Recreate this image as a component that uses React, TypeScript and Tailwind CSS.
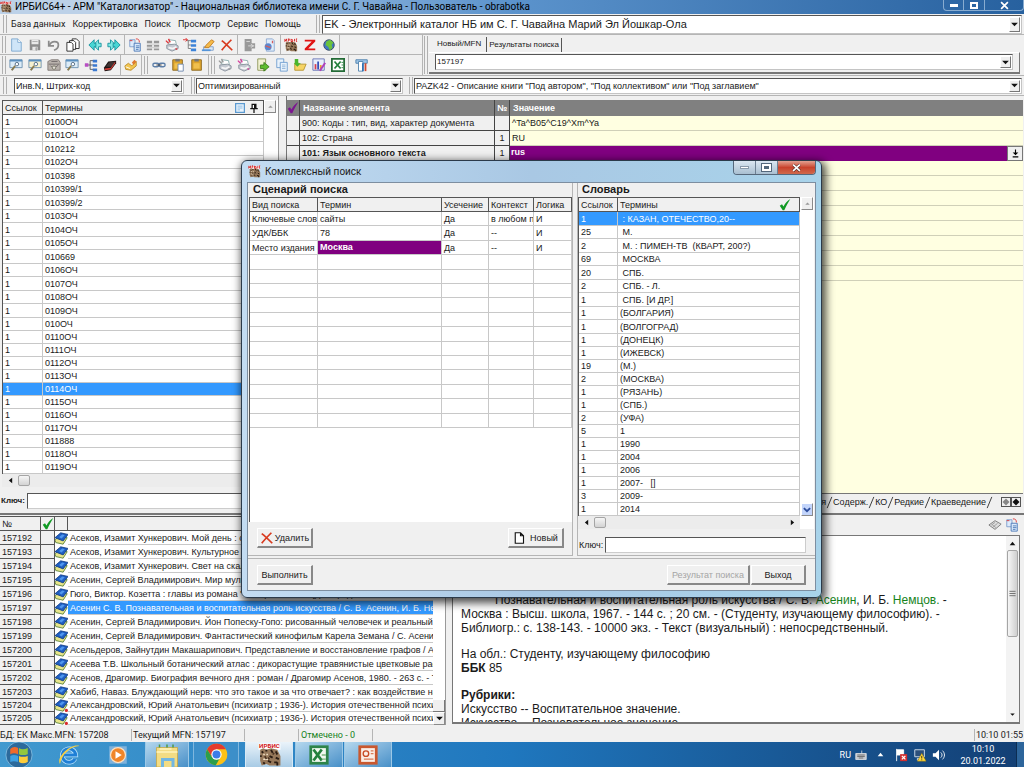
import type { ReactNode } from "react";

const terms = [
  "0100ОЧ", "0101ОЧ", "010212", "0102ОЧ", "010398", "010399/1", "010399/2", "0103ОЧ", "0104ОЧ",
  "0105ОЧ", "010669", "0106ОЧ", "0107ОЧ", "0108ОЧ", "0109ОЧ", "010ОЧ", "0110ОЧ", "0111ОЧ",
  "0112ОЧ", "0113ОЧ", "0114ОЧ", "0115ОЧ", "0116ОЧ", "0117ОЧ", "011888", "0118ОЧ", "0119ОЧ",
];

const dictionary = [
  ["1", " : КАЗАН, ОТЕЧЕСТВО,20--"],
  ["25", " М."],
  ["2", " М. : ПИМЕН-ТВ  (КВАРТ, 200?)"],
  ["69", " МОСКВА"],
  ["20", " СПБ."],
  ["2", " СПБ. - Л."],
  ["1", " СПБ. [И ДР.]"],
  ["1", "(БОЛГАРИЯ)"],
  ["1", "(ВОЛГОГРАД)"],
  ["1", "(ДОНЕЦК)"],
  ["1", "(ИЖЕВСК)"],
  ["19", "(М.)"],
  ["2", "(МОСКВА)"],
  ["1", "(РЯЗАНЬ)"],
  ["1", "(СПБ.)"],
  ["2", "(УФА)"],
  ["5", "1"],
  ["1", "1990"],
  ["1", "2004"],
  ["1", "2006"],
  ["1", "2007-   []"],
  ["3", "2009-"],
  ["1", "2014"],
];

const records = [
  ["157192", "Асеков, Изамит Хункерович. Мой день : стихи"],
  ["157193", "Асеков, Изамит Хункерович. Культурное строительство"],
  ["157194", "Асеков, Изамит Хункерович. Свет на скалах : стихи"],
  ["157195", "Асенин, Сергей Владимирович. Мир мультфильма"],
  ["157196", "Гюго, Виктор. Козетта : главы из романа \"Отверженные\" : [для среднего школьного возраста]"],
  ["157197", "Асенин С. В. Познавательная и воспитательная роль искусства / С. В. Асенин, И. Б. Немцов"],
  ["157198", "Асенин, Сергей Владимирович. Йон Попеску-Гопо: рисованный человечек и реальный мир"],
  ["157199", "Асенин, Сергей Владимирович. Фантастический кинофильм Карела Земана / С. Асенин"],
  ["157200", "Асельдеров, Зайнутдин Макашарипович. Представление и восстановление графов / А."],
  ["157201", "Асеева Т.В. Школьный ботанический атлас : дикорастущие травянистые цветковые растения"],
  ["157202", "Асенов, Драгомир. Биография вечного дня : роман / Драгомир Асенов, 1980. - 263 с. - Т"],
  ["157203", "Хабиб, Наваз. Блуждающий нерв: что это такое и за что отвечает? : как воздействие на"],
  ["157204", "Александровский, Юрий Анатольевич (психиатр ; 1936-). История отечественной психиатрии"],
  ["157205", "Александровский, Юрий Анатольевич (психиатр ; 1936-). История отечественной психиатрии"],
];

const scenario = [
  ["Ключевые слов", "сайты", "Да", "в любом п", "И"],
  ["УДК/ББК", "78", "Да", "--", "И"],
  ["Место издания", "Москва", "Да", "--", "И"],
  ...Array.from({ length: 12 }, () => ["", "", "", "", ""]),
];

const fields = [
  ["900: Коды : тип, вид, характер документа", "", "^Ta^B05^C19^Xm^Ya"],
  ["102: Страна", "1", "RU"],
  ["101: Язык основного текста", "1", "rus"],
  ...Array.from({ length: 8 }, () => ["", "", ""]),
];

const rowHeight = (i: number, tall: number) => (i < tall && i % 2 === 0 ? "h-[14px]" : "h-[13px]");

const Svg = ({ children, size = "size-[14px]" }: { children: ReactNode; size?: string }) => (
  <svg viewBox="0 0 16 16" className={`${size} shrink-0`} fill="none" aria-hidden="true">
    {children}
  </svg>
);

const Page = () => (
  <Svg>
    <path d="M3 1h7l4 4v10H3z" fill="#cfe5f8" stroke="#7aa7cf" />
    <path d="M10 1v4h4" fill="#fff" stroke="#7aa7cf" />
  </Svg>
);
const Save = () => (
  <Svg>
    <path d="M2 2h11l1 1v11H2z" fill="#8d8d8d" />
    <path d="M4 2h8v5H4zM5 10h6v4H5z" fill="#e9e9e9" />
    <path d="M9 11h1v3H9zM5 4h6" fill="#8d8d8d" stroke="#aaa" />
  </Svg>
);
const Undo = () => (
  <Svg>
    <path d="M2 3v6h6" stroke="#8a8a8a" strokeWidth="2" />
    <path d="M3 8c2-5 10-5 10 0 0 3-2 5-5 6" stroke="#8a8a8a" strokeWidth="2" />
  </Svg>
);
const Copies = () => (
  <Svg>
    <path d="M7 1h5l3 3v8H7z" fill="#fff" stroke="#222" />
    <path d="M4 3h5l2 2v8H4z" fill="#fff" stroke="#222" />
    <path d="M1 5h5l2 2v8H1z" fill="#fff" stroke="#222" />
  </Svg>
);
const Arrow = ({ flip = false }: { flip?: boolean }) => (
  <Svg>
    <g transform={flip ? "matrix(-1 0 0 1 16 0)" : undefined}>
      <path d="M6 8l6-6v4h3v4h-3v4z" fill="#7fe9e4" stroke="#168f9c" />
      <path d="M1 8l6-6v4h2v4H7v4z" fill="#48d5d3" stroke="#168f9c" />
    </g>
  </Svg>
);
const PageRed = () => (
  <Svg>
    <path d="M2 2h6v8H2z" fill="#dceafb" stroke="#7b9cc9" />
    <path d="M7 6h7v9H7z" fill="#dceafb" stroke="#4776b5" />
    <path d="M9 9h4M9 11h4M9 13h3" stroke="#4776b5" />
    <path d="M2 3h3M9 1c3 0 4 1 4 4" stroke="#d33" />
  </Svg>
);
const Rows = () => (
  <Svg>
    <path d="M1 3h6v3H1zM9 3h6v3H9zM1 8h6v2H1zM9 8h6v2H9zM1 12h6v2H1zM9 12h6v2H9z" fill="#989898" />
    <path d="M1 7h14M1 11h14" stroke="#c9c9c9" />
  </Svg>
);
const Printer = ({ mark = "#999" }: { mark?: string }) => (
  <Svg>
    <path d="M5 2l7 1 1 5-9-1z" fill="#fff" stroke="#8aa" />
    <path d="M2 8l9-1 4 2v3l-7 3-6-3z" fill="#c5cad2" stroke="#8b939e" />
    <path d="M4 11l5 1 4-2" stroke="#f6f6f6" strokeWidth="2" />
    <path d="M1 3l3 3M4 1l2 4M12 12l2 1" stroke={mark} strokeWidth="1.5" />
  </Svg>
);
const Tree = () => (
  <Svg>
    <path d="M4 3h5M6 3v9h3M6 8h3" stroke="#777" />
    <path d="M0 2h5M3 0l2 2-2 2" stroke="#d22" />
    <path d="M9 2h6v3H9zM9 7h6v3H9zM9 12h6v3H9z" fill="#3c83d8" />
  </Svg>
);
const Pencil = () => (
  <Svg>
    <path d="M3 10h11v4H3z" fill="#dce9f5" stroke="#7b9cc9" />
    <path d="M4 11l2-3 6-6 3 2-6 7z" fill="#f5bb4a" stroke="#c07a20" />
    <path d="M1 14h10" stroke="#5595d8" strokeWidth="2" />
  </Svg>
);
const Cross = () => (
  <Svg>
    <path d="M2 3c4 3 8 7 12 11M13 2C9 6 5 10 2 14" stroke="#d83a1f" strokeWidth="2" />
  </Svg>
);
const GrayDoc = () => (
  <Svg>
    <path d="M3 1h8v14H3zM6 6h9v6H6z" fill="#999" />
    <path d="M5 4h4M7 9h7M10 7l3 2-3 2" stroke="#ddd" />
  </Svg>
);
const PageGlobe = () => (
  <Svg>
    <path d="M5 1h7l2 2v12H5z" fill="#e0ecfa" stroke="#88a6cf" />
    <circle cx="7" cy="10" r="4" fill="#5b88cf" />
    <path d="M4 9l6 2M12 3v3" stroke="#d65d5d" strokeWidth="1.5" />
  </Svg>
);
const Leopard = ({ size, label = false }: { size?: string; label?: boolean }) => (
  <Svg size={size}>
    <path d="M1 1h14v4H1z" fill="#fff" />
    <path d="M2 5l2-1 2 1 3-1 4 1 2 4v6H8l-2-1-3 1-1-3z" fill="#96785a" />
    <path d="M3 6l1 1M6 5v1M9 5l1 2M12 6l1 2M2 9h1M8 9l2 1M12 10l2 1M7 12l2 1M11 13h2M4 13l1 1M13 13v2" stroke="#2a1c12" strokeWidth="1.200" />
    <path d="M4 8h1M7 8H6M4 11h3" stroke="#f3e2c6" />
    <path d="M5 9l1 2M7 10l1 1M10 8l1-1" stroke="#4a3322" />
    {label ? (
      <text x="8" y="4" textAnchor="middle" fontSize="4" fontWeight="bold" fill="#d21818">ИРБИС</text>
    ) : (
      <path d="M1 1v3l2-3v3M5 4V1h1v2M8 1v3h2V2H8M12 4V1M15 1h-1v3h1" stroke="#d21818" />
    )}
  </Svg>
);
const Zed = () => (
  <Svg>
    <path d="M2 2h12v2l-8 8h8v2H2v-2l8-8H2z" fill="#e01515" />
  </Svg>
);
const Globe = () => (
  <Svg>
    <circle cx="8" cy="8" r="6" fill="#3f78c4" stroke="#39495f" />
    <path d="M5 4l4-2 4 3-2 3 1 3-3 3-2-4-3-2z" fill="#6bc33b" />
  </Svg>
);
const Search = ({ tint = "#dcecf8" }: { tint?: string }) => (
  <Svg>
    <path d="M1 2h14v9H6l-2 3v-3H1z" fill={tint} stroke="#6a8fae" />
    <path d="M1 2h14v2H1z" fill="#5b90c0" />
    <circle cx="9" cy="7" r="2" fill="#fff" stroke="#47627b" />
    <path d="M7 9l-4 5" stroke="#8a7a4a" strokeWidth="2" />
  </Svg>
);
const Cabinet = () => (
  <Svg>
    <path d="M1 4l4-2h8l2 3v9H1z" fill="#b9b2ac" stroke="#7f7775" />
    <path d="M2 7h12M4 9l4 3 5-4M5 4h7" stroke="#6f6868" />
    <circle cx="8" cy="11" r="2" fill="#e5e0da" stroke="#776" />
  </Svg>
);
const Nodes = () => (
  <Svg>
    <path d="M1 8h6M7 3v10M7 3h4M7 8h4M7 13h4" stroke="#555" />
    <path d="M10 2h5v3h-5zM10 7h5v3h-5zM10 12h5v3h-5z" fill="#3b78cf" />
    <path d="M1 6h4v4H1z" fill="#b84ec4" />
  </Svg>
);
const RedBook = () => (
  <Svg>
    <path d="M1 11l5-7 9-1 0 3-6 8-7 1z" fill="#1c1414" />
    <path d="M3 10l4-5 7-1-4 6z" fill="#403433" />
    <path d="M2 12l7-1 5-7v2l-5 7-7 1z" fill="#d23c35" />
  </Svg>
);
const Eraser = () => (
  <Svg>
    <path d="M1 9l4-3 4 3 5-5v5l-6 5-6-1z" fill="#f2c650" stroke="#b98a2a" />
    <path d="M9 5l3-3 2 2-3 4z" fill="#e07a30" />
    <path d="M2 10l5 2" stroke="#fff" />
  </Svg>
);
const Link = () => (
  <Svg>
    <rect x="1" y="6" width="7" height="4" rx="2" stroke="#5d7fa8" strokeWidth="1.600" />
    <rect x="8" y="6" width="7" height="4" rx="2" stroke="#5d7fa8" strokeWidth="1.600" />
    <path d="M5 8h6" stroke="#333" />
  </Svg>
);
const Clipboard = ({ page = false }: { page?: boolean }) => (
  <Svg>
    <path d="M2 2h11v12H2z" fill="#dda52d" stroke="#8c661c" />
    <path d="M5 1h5v3H5z" fill="#777" />
    <path d="M4 6h7v6H4z" fill="#f0c04e" />
    {page && <path d="M8 7h6v8H8z" fill="#fff" stroke="#6985ad" />}
  </Svg>
);
const GreenExport = () => (
  <Svg>
    <path d="M2 1h9v13H2z" fill="#f2f2d4" stroke="#8a9252" />
    <path d="M5 8h4V5l6 5-6 5v-3H5z" fill="#5ebd2f" stroke="#3c7d1e" />
  </Svg>
);
const BluePages = () => (
  <Svg>
    <path d="M2 1h8v10H2z" fill="#e9f2fb" stroke="#6d9bcf" />
    <path d="M6 5h8v10H6z" fill="#e9f2fb" stroke="#6d9bcf" />
    <path d="M8 8h4M8 10h4M8 12h4" stroke="#8fb2d8" />
  </Svg>
);
const GreenFolder = () => (
  <Svg>
    <path d="M2 6h5l1 1h7l-3 7H2z" fill="#f6d465" stroke="#b6922d" />
    <path d="M2 1h4v5h3L5 10 1 6h1z" fill="#49b52d" />
  </Svg>
);
const Chart = () => (
  <Svg>
    <path d="M1 1h13v13H1z" fill="#e8eefb" stroke="#6470b4" />
    <path d="M3 7h2v6H3z" fill="#d83e4e" />
    <path d="M6 4h2v9H6z" fill="#364fb8" />
    <path d="M9 8h2v5H9z" fill="#e5a22f" />
    <path d="M8 14l6-9 2 1-6 9z" fill="#b13fb9" />
  </Svg>
);
const Excel = () => (
  <Svg>
    <path d="M1 1h14v14H1z" fill="#fff" stroke="#236b36" strokeWidth="2" />
    <path d="M4 4l7 8M11 4l-7 8" stroke="#23803c" strokeWidth="2" />
    <path d="M12 5h2M12 8h2M12 11h2" stroke="#23803c" />
  </Svg>
);
const Tools = () => (
  <Svg>
    <path d="M1 2h13v4H1z" fill="#9fc6e8" stroke="#4c7fac" />
    <path d="M4 4h5v11H4z" fill="#fff" stroke="#4c7fac" />
    <path d="M9 6v9" stroke="#2f72b5" strokeWidth="2" />
    <path d="M12 6v9" stroke="#d04a30" strokeWidth="2" />
  </Svg>
);
const Check = ({ color }: { color: string }) => (
  <Svg size="size-[12px]">
    <path d="M1 9l3-2 2 3c2-4 5-8 9-10C12 5 10 9 7 15H5z" fill={color} />
  </Svg>
);
const Book = ({ red = false }: { red?: boolean }) => (
  <Svg size="size-[13px]">
    <path d="M0 10l5-5 10 2-5 8-9-2z" fill="#e8e58a" stroke="#4e7a2f" />
    <path d="M0 7l7-6 9 2-6 8z" fill="#1f5fc4" stroke="#123c83" />
    <path d="M5 6l4-3 3 1-4 4z" fill="#4f97ee" />
    {red && <circle cx="14" cy="14" r="2" fill="#d92b2b" />}
  </Svg>
);
const Triangle = ({ d = "M4 6h8l-4 4z", color = "#111" }: { d?: string; color?: string }) => (
  <Svg size="size-[9px]">
    <path d={d} fill={color} />
  </Svg>
);

const Sep = () => <span className="mx-px w-px self-stretch bg-[#b5b5b5]" />;
const Grip = () => (
  <span className="flex shrink-0 gap-[2px] self-stretch px-px py-px">
    <i className="w-px bg-[#b0b0b0]" />
    <i className="w-px bg-[#b0b0b0]" />
  </span>
);

const ToolGroup = ({ width, items }: { width: string; items: [string, ReactNode][] }) => (
  <span className={`flex ${width}`}>
    {items.map(([label, icon]) => (
      <button key={label} type="button" aria-label={label} className="flex flex-1 items-center justify-center">
        {icon}
      </button>
    ))}
  </span>
);

const Combo = ({ label, value, className }: { label: string; value: string; className: string }) => (
  <span className={`relative flex min-w-0 border border-[#c4c4c4] border-t-[#555] border-l-[#555] bg-white ${className}`}>
    <select aria-label={label} className="w-full min-w-0 appearance-none bg-transparent pl-px outline-none">
      <option>{value}</option>
    </select>
    <span className="pointer-events-none absolute inset-y-px right-px flex w-[11px] items-center justify-center border border-[#777] border-t-white border-l-white bg-[#efefef]">
      <Triangle d="M2 5h12l-6 6z" />
    </span>
  </span>
);

const ScrollButton = ({ label, className = "bg-[#f0f0f0]", children }: { label: string; className?: string; children: ReactNode }) => (
  <button
    type="button"
    aria-label={label}
    className={`flex h-[13px] w-3 shrink-0 items-center justify-center border border-[#8a8a8a] border-t-white border-l-white ${className}`}
  >
    {children}
  </button>
);

const HScroll = () => (
  <div className="flex h-[13px] items-center bg-[#ececec]">
    <span className="flex w-4 justify-center">
      <Triangle d="M11 3v10L5 8z" />
    </span>
    <span className="h-[11px] w-3 rounded-[2px] border border-[#a5a5a5] bg-linear-to-b from-[#f6f6f6] to-[#d3d3d3]" />
    <span className="ml-auto flex w-4 justify-center">
      <Triangle d="M5 3v10l6-5z" />
    </span>
  </div>
);

const th = "h-[14px] border-r border-b border-[#555] p-0 pl-[2px] text-left font-normal leading-3";
const td = "overflow-hidden border-r border-b border-[#c8c8c8] p-0 pl-[2px] leading-3 whitespace-pre";

const Toolbars = () => (
  <div className="flex border-b border-[#b5b5b5]">
    <div className="flex w-[422px] shrink-0 flex-col">
      <div className="flex h-5 border-b border-[#b5b5b5] pl-px">
        <Grip />
        <ToolGroup width="w-[75px]" items={[["Новая", <Page />], ["Сохранить", <Save />], ["Отменить", <Undo />], ["Копия", <Copies />]]} />
        <Sep />
        <ToolGroup width="w-[38px]" items={[["Назад", <Arrow />], ["Вперед", <Arrow flip />]]} />
        <Sep />
        <ToolGroup
          width="w-[110px]"
          items={[["Вставить", <PageRed />], ["Строки", <Rows />], ["Печать", <Printer mark="#e0343a" />], ["Дерево", <Tree />], ["Правка", <Pencil />], ["Удалить запись", <Cross />]]}
        />
        <Sep />
        <ToolGroup width="w-[40px]" items={[["Документ", <GrayDoc />], ["Веб", <PageGlobe />]]} />
        <Sep />
        <ToolGroup width="w-[56px]" items={[["ИРБИС", <Leopard />], ["Z39.50", <Zed />], ["Интернет", <Globe />]]} />
        <Sep />
      </div>
      <div className="flex h-5 pl-px">
        <Grip />
        <ToolGroup
          width="w-[112px]"
          items={[["Поиск", <Search />], ["Поиск 2", <Search tint="#f5f0cf" />], ["Картотека", <Cabinet />], ["Поиск 3", <Search />], ["Узлы", <Nodes />], ["Книга", <RedBook />]]}
        />
        <Sep />
        <ToolGroup width="w-[18px]" items={[["Очистить", <Eraser />]]} />
        <Sep />
        <Grip />
        <ToolGroup width="w-[58px]" items={[["Ссылка", <Link />], ["Вставка", <Clipboard page />], ["Буфер", <Clipboard />]]} />
        <Sep />
        <Grip />
        <ToolGroup
          width="w-[131px]"
          items={[["Принтер", <Printer />], ["Принтер 2", <Printer mark="#d33e9a" />], ["Экспорт", <GreenExport />], ["Страницы", <BluePages />], ["Импорт", <GreenFolder />], ["Статистика", <Chart />], ["Excel", <Excel />]]}
        />
        <Sep />
        <ToolGroup width="w-[24px]" items={[["Настройки", <Tools />]]} />
      </div>
    </div>
    <div className="flex min-w-0 flex-1 border-l border-[#b5b5b5]">
      <Grip />
      <div className="flex min-w-0 flex-1 flex-col pt-[2px] pr-1 text-[8px]">
        <div role="tablist" className="flex h-[15px] pl-[3px]">
          <button type="button" role="tab" aria-selected="true" className="border-r border-[#555] px-[5px] pb-px">
            Новый/MFN
          </button>
          <button type="button" role="tab" aria-selected="false" className="mt-px border-r border-[#555] px-[2px]">
            Результаты поиска
          </button>
        </div>
        <div className="border-t border-r border-b-2 border-t-white border-r-[#777] border-b-[#777] px-[6px] pt-px pb-[2px]">
          <Combo label="MFN" value="157197" className="h-4" />
        </div>
      </div>
    </div>
  </div>
);

const TermsPanel = () => (
  <div className="w-[279px] shrink-0 border-r border-[#999] pt-1">
    <div className="flex pl-[2px]">
      <table className="w-[262px] table-fixed border-separate border-spacing-0 border-t border-l border-[#555] bg-white">
        <thead>
          <tr className="bg-[#f0f0f0]">
            <th className={`${th} w-10`}>Ссылок</th>
            <th className={th}>
              <span className="flex items-center justify-between pr-1">
                Термины
                <span className="flex items-center gap-1">
                  <Svg size="size-[10px]">
                    <path d="M1 1h14v14H1z" fill="#e9f3fc" stroke="#5c9ad0" strokeWidth="2" />
                    <path d="M4 5h8M4 8h8M4 11h4" stroke="#8dbbe2" strokeWidth="1.500" />
                  </Svg>
                  <Svg size="size-[10px]">
                    <path d="M4 1h8v7h2v2H2V8h2zM7 10h2v6H7z" fill="#111" />
                    <path d="M6 3h2v5H6z" fill="#fff" />
                  </Svg>
                </span>
              </span>
            </th>
          </tr>
        </thead>
        <tbody>
          {terms.map((term, i) => (
            <tr key={term} className={`${rowHeight(i, 15)} ${term === "0114ОЧ" ? "bg-[#3399ff] text-white" : ""}`}>
              <td className={td}>1</td>
              <td className={td}>{term}</td>
            </tr>
          ))}
        </tbody>
      </table>
      <div className="flex flex-1 flex-col justify-between bg-white">
        <ScrollButton label="Вверх">
          <Triangle d="M4 10h8L8 6z" color="#999" />
        </ScrollButton>
        <ScrollButton label="Вниз">
          <Triangle />
        </ScrollButton>
      </div>
    </div>
    <div className="pl-[2px]">
      <HScroll />
    </div>
    <div className="flex items-center pt-[6px] pb-[3px] pl-px text-[8px] font-bold">
      <label htmlFor="key-main" className="w-[26px]">Ключ:</label>
      <input id="key-main" className="h-4 min-w-0 flex-1 border border-[#ccc] border-t-[#555] border-l-[#555] bg-white" />
    </div>
  </div>
);

const FieldsPanel = () => (
  <div className="ml-[7px] flex min-w-0 flex-1 flex-col border-l border-[#777] pt-1 pr-px pb-[2px]">
    <div className="flex-1 border-b border-[#777] bg-[#ffffe1]">
      <table className="w-full table-fixed border-separate border-spacing-0">
        <thead>
          <tr className="bg-[#808080] text-white">
            <th className="h-4 w-[13px] border-r border-[#444] p-0"><Check color="#7b1590" /></th>
            <th className="w-[195px] border-r border-[#444] p-0 pl-[3px] text-left">Название элемента</th>
            <th className="w-[15px] border-r border-[#444] p-0">№</th>
            <th className="p-0 pl-[3px] text-left">Значение</th>
          </tr>
        </thead>
        <tbody>
          {fields.map(([name, no, value], i) => (
            <tr key={i} className="h-[15px]">
              <td className="border-r border-b border-[#444] bg-[#f0f0f0] p-0" />
              <td className={`overflow-hidden border-r border-b border-[#444] bg-[#f0f0f0] p-0 pl-[2px] leading-3 whitespace-nowrap ${i === 2 ? "font-bold" : ""}`}>{name}</td>
              <td className="border-r border-b border-[#444] bg-[#f0f0f0] p-0 text-center leading-3">{no}</td>
              <td className={i === 2 ? "bg-[#800080] p-0 leading-3 font-bold text-white" : "border-b border-[#d0d0b8] p-0 pl-[2px] leading-3"}>
                {i === 2 ? (
                  <span className="flex h-[15px] justify-between pl-px">
                    {value}
                    <button type="button" aria-label="Развернуть" className="flex w-4 items-center justify-center border border-[#777] bg-[#f0f0f0]">
                      <Svg size="size-[9px]">
                        <path d="M7 1h2v5h4l-5 5-5-5h4zM3 13h10v2H3z" fill="#000" />
                      </Svg>
                    </button>
                  </span>
                ) : value}
              </td>
            </tr>
          ))}
        </tbody>
      </table>
    </div>
    <div className="flex h-4 items-center justify-end bg-[#f0f0f0] pr-[2px]">
      {["Технология", "Содерж.", "КО", "Редкие", "Краеведение"].map((tab) => (
        <button key={tab} type="button" className="flex items-center">
          {tab}
          <svg viewBox="0 0 7 14" className="h-[13px] w-[7px]" aria-hidden="true">
            <path d="M1 13L6 1" stroke="#333" />
          </svg>
        </button>
      ))}
      <span className="ml-2 flex">
        {["#888", "#111"].map((color) => (
          <button key={color} type="button" aria-label="Прокрутить вкладки" className="border border-[#555]">
            <Svg size="size-[8px]">
              <path d="M8 1l7 7-7 7-7-7z" fill={color} />
            </Svg>
          </button>
        ))}
      </span>
    </div>
  </div>
);

const RecordsPanel = () => (
  <div className="flex w-[446px] shrink-0 self-start border-r border-[#999] pt-px">
    <table className="w-[433px] table-fixed border-separate border-spacing-0 border-t border-[#555] bg-white">
      <thead>
        <tr className="bg-[#f0f0f0]">
          <th className={`${th} w-[41px]`}>№</th>
          <th className={`${th} w-[14px] pl-px`}><Check color="#119a24" /></th>
          <th className={`${th} w-[13px]`} />
          <th className={th} />
        </tr>
      </thead>
      <tbody>
        {records.map(([mfn, text], i) => (
          <tr key={mfn} className={i < 12 ? "h-[14px]" : "h-[13px]"}>
            <td className="border-r border-b border-[#555] bg-[#f0f0f0] p-0 pl-[2px] leading-3">{mfn}</td>
            <td className="border-r border-b border-[#555] bg-[#f0f0f0] p-0" />
            <td className="p-0">
              <span className="flex h-3 items-center"><Book red={i > 11} /></span>
            </td>
            <td className={`overflow-hidden border-b border-[#c8c8c8] p-0 pl-[2px] leading-3 whitespace-nowrap ${mfn === "157197" ? "bg-[#3399ff] text-white" : ""}`}>{text}</td>
          </tr>
        ))}
      </tbody>
    </table>
    <div className="flex flex-1 flex-col justify-between bg-white">
      <ScrollButton label="Вверх"><Triangle d="M4 10h8L8 6z" /></ScrollButton>
      <span className="flex flex-col">
        <i className="h-3 w-3 border-r border-b border-[#777] bg-[#f0f0f0]" />
        <ScrollButton label="Вниз"><Triangle d="M2 5h12l-6 6z" /></ScrollButton>
      </span>
    </div>
  </div>
);

const PreviewPanel = () => (
  <div className="ml-[6px] flex min-w-0 flex-1 flex-col pr-1 pb-1">
    <div className="flex h-5 items-center justify-end gap-[3px] pr-px">
      <Svg>
        <path d="M1 8l7-5 7 4-7 6z" fill="#ddd" stroke="#777" />
        <path d="M4 8l4-3M6 10l5-4M4 7l5 4" stroke="#999" />
      </Svg>
      <PageRed />
    </div>
    <div className="flex h-0 grow border border-b-2 border-[#777] bg-white">
      <article className="min-w-0 flex-1 overflow-hidden pt-[57px] pl-2 text-xs leading-[14px]">
        <p className="indent-[34px]">
          Познавательная и воспитательная роль искусства / С. В.{" "}
          <a href="#asenin" className="text-[#16831c]">Асенин</a>, И. Б.{" "}
          <a href="#nemtsov" className="text-[#16831c]">Немцов.</a> -
        </p>
        <p>Москва : Высш. школа, 1967. - 144 с. ; 20 см. - (Студенту, изучающему философию). -</p>
        <p>Библиогр.: с. 138-143. - 10000 экз. - Текст (визуальный) : непосредственный.</p>
        <p className="mt-[13px] leading-[13px]">На обл.: Студенту, изучающему философию</p>
        <p><b>ББК</b> 85</p>
        <h2 className="mt-[13px] font-bold">Рубрики:</h2>
        <p>Искусство -- Воспитательное значение.</p>
        <p>Искусство -- Познавательное значение.</p>
      </article>
      <div className="flex w-[13px] flex-col items-center bg-[#f3f3f3] py-[3px]">
        <Triangle d="M3 11h10L8 5z" />
        <span className="mt-[2px] flex h-[87px] w-[11px] items-center justify-center rounded-[2px] border border-[#a5a5a5] bg-linear-to-r from-[#f6f6f6] to-[#cfcfcf]">
          <Svg size="size-[7px]">
            <path d="M1 3h14M1 8h14M1 13h14" stroke="#666" strokeWidth="2" />
          </Svg>
        </span>
        <span className="mt-auto"><Triangle /></span>
      </div>
    </div>
  </div>
);

const dialogButton = "flex h-5 items-center justify-center gap-px border border-r-2 border-b-2 border-[#888] border-t-white border-l-white bg-[#f0f0f0] whitespace-nowrap";

const SearchDialog = () => (
  <section
    role="dialog"
    aria-labelledby="dialog-title"
    className="absolute top-[160px] left-[241px] flex w-[581px] flex-col rounded-md border border-[#2b3a4a] bg-linear-to-r from-[#c3dcf2] via-[#a9c8e4] to-[#a8d3ea] px-[5px] pb-[6px] shadow-[2px_3px_8px_2px_rgba(0,0,0,0.7)]"
  >
    <header className="flex h-[21px] items-start justify-between">
      <h1 id="dialog-title" className="flex h-full items-center gap-1 pl-px font-[Roboto] text-[10px] text-[#222]">
        <Leopard size="size-[13px]" />
        Комплексный поиск
      </h1>
      <div className="flex h-[14px] overflow-hidden rounded-b border border-t-0 border-[#56687b]">
        <button type="button" aria-label="Свернуть" className="flex w-[22px] items-center justify-center border-r border-[#6d8093] bg-linear-to-b from-[#dbe7f1] to-[#a9bfd1]">
          <i className="h-[3px] w-[9px] border border-[#8b9bab] bg-white" />
        </button>
        <button type="button" aria-label="Развернуть" className="flex w-[22px] items-center justify-center border-r border-[#6d8093] bg-linear-to-b from-[#dbe7f1] to-[#a9bfd1]">
          <i className="h-[7px] w-[9px] border-2 border-white bg-[#54687c] outline-1 outline-[#54687c]" />
        </button>
        <button type="button" aria-label="Закрыть" className="flex w-[37px] items-center justify-center bg-linear-to-b from-[#e2a091] via-[#c8422c] to-[#d0694c]">
          <Svg size="size-[9px]">
            <path d="M2 3l12 11M14 3L2 14" stroke="#52302b" strokeWidth="5" />
            <path d="M2 3l12 11M14 3L2 14" stroke="#fff" strokeWidth="3" />
          </Svg>
        </button>
      </div>
    </header>
    <div className="border border-[#7d8ea0] bg-[#f0f0f0]">
      <div className="flex gap-1">
        <div className="w-[325px] border-r border-b border-[#b5b5b5] pl-px">
          <h2 className="h-[14px] pl-1 text-[11px] leading-[13px] font-bold">Сценарий поиска</h2>
          <div className="h-[325px] border-l border-[#555] bg-white">
            <table className="w-full table-fixed border-separate border-spacing-0 border-t border-[#555]">
              <thead>
                <tr className="bg-[#f0f0f0]">
                  <th className={`${th} w-[68px]`}>Вид поиска</th>
                  <th className={`${th} w-[124px]`}>Термин</th>
                  <th className={`${th} w-[47px]`}>Усечение</th>
                  <th className={`${th} w-[45px]`}>Контекст</th>
                  <th className={th}>Логика</th>
                </tr>
              </thead>
              <tbody>
                {scenario.map((row, i) => (
                  <tr key={i} className={i % 5 === 1 || i % 5 === 3 ? "h-[15px]" : "h-[14px]"}>
                    {row.map((cell, j) => (
                      <td key={j} className={`${td} ${cell === "Москва" ? "bg-[#800080] align-top font-bold text-white" : ""}`}>{cell}</td>
                    ))}
                  </tr>
                ))}
              </tbody>
            </table>
          </div>
          <div className="flex justify-between pt-[6px] pr-2 pb-[7px] pl-2">
            <button type="button" className={`${dialogButton} w-14`}><Cross />Удалить</button>
            <button type="button" className={`${dialogButton} w-14`}>
              <Svg size="size-[12px]">
                <path d="M3 1h7l4 4v10H3zM10 1v4h4" fill="#fff" stroke="#111" strokeWidth="1.500" />
              </Svg>
              <span className="pl-1">Новый</span>
            </button>
          </div>
        </div>
        <div className="min-w-0 flex-1 border-b border-l border-[#b5b5b5] pr-px">
          <h2 className="h-[14px] pl-1 text-[11px] leading-[13px] font-bold">Словарь</h2>
          <div className="flex">
            <div className="min-w-0 flex-1">
              <table className="w-full table-fixed border-separate border-spacing-0 border-t border-l border-[#555] bg-white">
                <thead>
                  <tr className="bg-[#f0f0f0]">
                    <th className={`${th} w-[39px]`}>Ссылок</th>
                    <th className={th}>
                      <span className="flex items-center justify-between pr-2">Термины<Check color="#119a24" /></span>
                    </th>
                  </tr>
                </thead>
                <tbody>
                  {dictionary.map(([count, term], i) => (
                    <tr key={term} className={`${rowHeight(i, 9)} ${i === 0 ? "bg-[#3399ff] text-white" : ""}`}>
                      <td className={td}>{count}</td>
                      <td className={td}>{term}</td>
                    </tr>
                  ))}
                </tbody>
              </table>
              <HScroll />
            </div>
            <div className="flex w-[14px] flex-col justify-between bg-white pb-[13px] pl-px">
              <ScrollButton label="Вверх"><Triangle d="M4 10h8L8 6z" color="#999" /></ScrollButton>
              <ScrollButton label="Вниз" className="bg-[#c3d5fb]">
                <Svg size="size-[10px]">
                  <path d="M3 5l5 5 5-5" stroke="#2c4d9c" strokeWidth="3" />
                </Svg>
              </ScrollButton>
            </div>
          </div>
          <div className="flex items-center pt-2 pr-2">
            <label htmlFor="key-dialog" className="w-[27px] pl-px">Ключ:</label>
            <input id="key-dialog" className="h-4 min-w-0 flex-1 border border-[#ccc] border-t-[#555] border-l-[#555] bg-white" />
          </div>
        </div>
      </div>
      <footer className="mt-[2px] flex items-center border-t border-[#b5b5b5] px-[9px] pt-[6px] pb-[5px]">
        <button type="button" className={`${dialogButton} w-14`}>Выполнить</button>
        <button type="button" disabled className={`${dialogButton} ml-auto w-[83px] text-[#a5a5a5]`}>Результат поиска</button>
        <button type="button" className={`${dialogButton} ml-px w-[55px]`}>Выход</button>
      </footer>
    </div>
  </section>
);

const taskButton = "flex h-full items-center justify-center overflow-hidden";
const taskActive = "border-x border-[#9cc8e6] bg-linear-to-br from-[#b5d8ee] to-[#4790c8]";

const Taskbar = () => (
  <nav className="flex h-[25px] items-stretch overflow-hidden bg-linear-to-r from-[#4199cf] via-[#1f77be] to-[#133f74] font-[Roboto] text-white">
    <button type="button" aria-label="Пуск" className={`${taskButton} w-[38px]`}>
      <Svg size="size-[28px]">
        <circle cx="8" cy="8" r="7.500" fill="#2c6a9c" stroke="#82bde0" strokeWidth="0.500" />
        <path d="M3 4.500q2-2 4.500-.5v3.500q-2.500-1-4.500 0z" fill="#ef6a2c" />
        <path d="M8 4q2 1.500 5 0v3.500q-3 1-5 0z" fill="#92c83e" />
        <path d="M3 8.500q2-1 4.500 0V12Q5 11 3 12z" fill="#3da1e4" />
        <path d="M8 8.500q2 1 5 0V12q-3 1.500-5 0z" fill="#fdcd3a" />
      </Svg>
    </button>
    <button type="button" aria-label="Internet Explorer" className={`${taskButton} ml-2 w-[46px]`}>
      <Svg size="size-[24px]">
        <path d="M12 10.500a4.500 4.500 0 1 1 .5-2.500H4.500" stroke="#bfe6ff" strokeWidth="3" />
        <path d="M12 10.500a4.500 4.500 0 1 1 .5-2.500H4.500" stroke="#1f7fd6" strokeWidth="2" />
        <path d="M2 14C-1 10 9 0 15 2 9 2 3 8 2 14z" fill="#f4cf45" />
      </Svg>
    </button>
    <button type="button" aria-label="Проигрыватель" className={`${taskButton} w-[51px]`}>
      <Svg size="size-[20px]">
        <rect x="1" y="1" width="14" height="14" fill="#7fb2dc" />
        <circle cx="8" cy="8" r="6" fill="#f0862a" stroke="#fbe1c2" />
        <path d="M6 5v6l5-3z" fill="#fff" />
      </Svg>
    </button>
    <button type="button" aria-label="Проводник" className={`${taskButton} ${taskActive} ml-[2px] w-11`}>
      <Svg size="size-[24px]">
        <path d="M1 3h14v13H1z" fill="#f3dc83" stroke="#c9a53d" strokeWidth="0.500" />
        <path d="M3 1v2M8 1v2M12 1v2" stroke="#4c9b48" />
        <path d="M1 6h14M3 4h8" stroke="#fff3bd" />
        <path d="M4 10h9v6H4z" fill="#73b7e1" />
        <path d="M6 12h5v4H6z" fill="#f3dc83" />
      </Svg>
    </button>
    <button type="button" aria-label="Chrome" className={`${taskButton} ml-1 w-[46px] border-x border-[#7fb7de] bg-[#3c8fc9]`}>
      <Svg size="size-[23px]">
        <circle cx="8" cy="8" r="7.500" fill="#fbc116" />
        <path d="M1.500 4.300A7.500 7.500 0 0 1 14.500 4.300H8L4.800 9.800z" fill="#e33b2e" />
        <path d="M1.500 4.300A7.500 7.500 0 0 0 7.500 15.500l3.300-5.700L8 11.500 4.800 9.800z" fill="#2c9e4b" />
        <circle cx="8" cy="8" r="3.600" fill="#fff" />
        <circle cx="8" cy="8" r="2.800" fill="#3c7ce8" />
      </Svg>
    </button>
    <button type="button" aria-label="ИРБИС64" className={`${taskButton} ml-[6px] w-12 border-x border-[#d7e9f5] bg-linear-to-b from-[#eaf3fa] to-[#a8cbe5]`}>
      <Leopard size="size-[25px]" label />
    </button>
    <button type="button" aria-label="Microsoft Excel" className={`${taskButton} ${taskActive} ml-[2px] w-12`}>
      <Svg size="size-[22px]">
        <path d="M1 1h14v14H1z" fill="#2e8449" />
        <path d="M3 3h10v10H3z" fill="#f1f8ef" />
        <path d="M4 4l6 8M10 4l-6 8" stroke="#23803c" strokeWidth="2" />
        <path d="M10 8h3M10 11h3" stroke="#7cb57d" />
      </Svg>
    </button>
    <button type="button" aria-label="PowerPoint" className={`${taskButton} ${taskActive} ml-px w-12`}>
      <Svg size="size-[22px]">
        <path d="M1 1h14v14H1z" fill="#c9582f" />
        <path d="M3 3h10v10H3z" fill="#fbeee6" />
        <circle cx="6.500" cy="7" r="2" stroke="#c84b25" />
        <path d="M10 5h2M10 7h2M5 11h7" stroke="#d97a55" />
      </Svg>
    </button>
    <div className="ml-auto flex items-center text-[9px]">
      <span className="mr-1">RU</span>
      <Svg size="size-[12px]">
        <path d="M1 6h14v8H1zM9 6V2" fill="#c5c9cf" stroke="#e7e7e7" />
        <path d="M3 8h10M3 10h10M5 12h6" stroke="#555" />
      </Svg>
      <span className="mx-[9px]"><Triangle d="M3 11h10L8 5z" color="#fff" /></span>
      <Svg size="size-[14px]">
        <path d="M3 1v14M3 2h8v6H3" fill="#fff" stroke="#fff" />
        <path d="M7 7h8v8H7z" fill="#d32f2f" />
        <path d="M9 9l4 4M13 9l-4 4" stroke="#fff" strokeWidth="1.500" />
      </Svg>
      <span className="ml-[5px] flex">
        <Svg size="size-[14px]">
          <path d="M2 2h11v8H2zM5 12h6v2H5z" fill="#2b4f7b" stroke="#dbe7f2" />
          <path d="M10 6l5 9H5z" fill="#ffd83a" stroke="#8a6a00" strokeWidth="0.500" />
          <path d="M10 9v3M10 13v1" stroke="#222" />
        </Svg>
      </span>
      <span className="ml-[5px] flex">
        <Svg size="size-[14px]">
          <path d="M1 6h3l4-4v12l-4-4H1z" fill="#fff" />
          <path d="M10 5c2 2 2 4 0 6M12 3c3 3 3 7 0 10" stroke="#fff" />
        </Svg>
      </span>
      <time className="ml-3 flex w-[50px] flex-col text-center leading-3">
        <span>10:10</span>
        <span>20.01.2022</span>
      </time>
      <span className="ml-2 h-full w-2 border-l border-[#0c2d52] bg-[#2d659b]" />
    </div>
  </nav>
);

const App = () => (
  <div className="relative flex min-h-screen flex-col overflow-hidden bg-[#f0f0f0] font-['Liberation_Sans',sans-serif] text-[9px] leading-3 text-[#1a1a1a]">
    <header className="flex h-[14px] items-center justify-between bg-linear-to-r from-[#bcd1e8] from-10% via-[#5b93cc] via-50% to-[#27619f] font-[Roboto] text-[10px] text-black">
      <span className="flex items-center gap-[3px]">
        <Leopard size="size-[12px]" />
        ИРБИС64+ - АРМ "Каталогизатор" - Национальная библиотека имени С. Г. Чавайна - Пользователь - obrabotka
      </span>
      <span className="flex h-[11px] self-start overflow-hidden rounded-b border border-t-0 border-[#88acd0] text-white">
        <button type="button" aria-label="Свернуть окно" className="flex w-5 items-center justify-center border-r border-[#88acd0]">
          <i className="h-[3px] w-2 bg-white" />
        </button>
        <button type="button" aria-label="Развернуть окно" className="flex w-[21px] items-center justify-center border-r border-[#88acd0]">
          <i className="h-[7px] w-2 border-2 border-white" />
        </button>
        <button type="button" aria-label="Закрыть окно" className="flex w-[38px] items-center justify-center">
          <Svg size="size-[9px]">
            <path d="M2 2l12 12M14 2L2 14" stroke="#fff" strokeWidth="3" />
          </Svg>
        </button>
      </span>
    </header>

    <div className="flex h-[21px] items-center border-b border-[#b5b5b5] pr-[2px] pl-[2px]">
      <Grip />
      <nav className="flex w-[307px] gap-[7px] pl-[3px] font-[Roboto] whitespace-nowrap">
        {["База данных", "Корректировка", "Поиск", "Просмотр", "Сервис", "Помощь"].map((item) => (
          <button key={item} type="button">{item}</button>
        ))}
      </nav>
      <Grip />
      <Combo label="База данных" value="EK - Электронный каталог НБ им С. Г. Чавайна Марий Эл Йошкар-Ола" className="ml-px h-[19px] flex-1 text-[11px]" />
    </div>

    <Toolbars />

    <div className="flex h-5 items-center border-b border-[#b5b5b5] pr-[2px] pl-[2px]">
      <Grip />
      <Combo label="Словарь" value="Инв.N, Штрих-код" className="ml-[6px] h-4 w-[170px]" />
      <span className="ml-[6px] flex self-stretch"><Grip /></span>
      <Combo label="Формат" value="Оптимизированный" className="h-4 w-[207px]" />
      <span className="ml-[5px] flex self-stretch"><Grip /></span>
      <Combo label="Рабочий лист" value={'PAZK42 - Описание книги "Под автором", "Под коллективом" или "Под заглавием"'} className="h-4 flex-1" />
    </div>

    <main className="flex flex-1 flex-col">
      <div className="flex">
        <TermsPanel />
        <FieldsPanel />
      </div>
      <div className="mt-px flex flex-1 border-t-2 border-[#777]">
        <RecordsPanel />
        <PreviewPanel />
      </div>
    </main>

    <footer className="flex h-[14px] items-center font-[Roboto] whitespace-nowrap">
      <span className="w-[132px] border-r border-[#b5b5b5]">БД: ЕК Макс.MFN: 157208</span>
      <span className="w-[113px] border-r border-[#b5b5b5] pl-px">Текущий MFN: 157197</span>
      <span className="h-3 w-[54px] border-r border-[#b5b5b5]" />
      <span className="w-[74px] border-r border-[#b5b5b5] pl-[2px] text-[#16831c]">Отмечено - 0</span>
      <span className="ml-auto w-[50px] border-l border-[#b5b5b5] pl-px">10:10 01:55</span>
    </footer>
    <Taskbar />

    <SearchDialog />
  </div>
);

export default App;
